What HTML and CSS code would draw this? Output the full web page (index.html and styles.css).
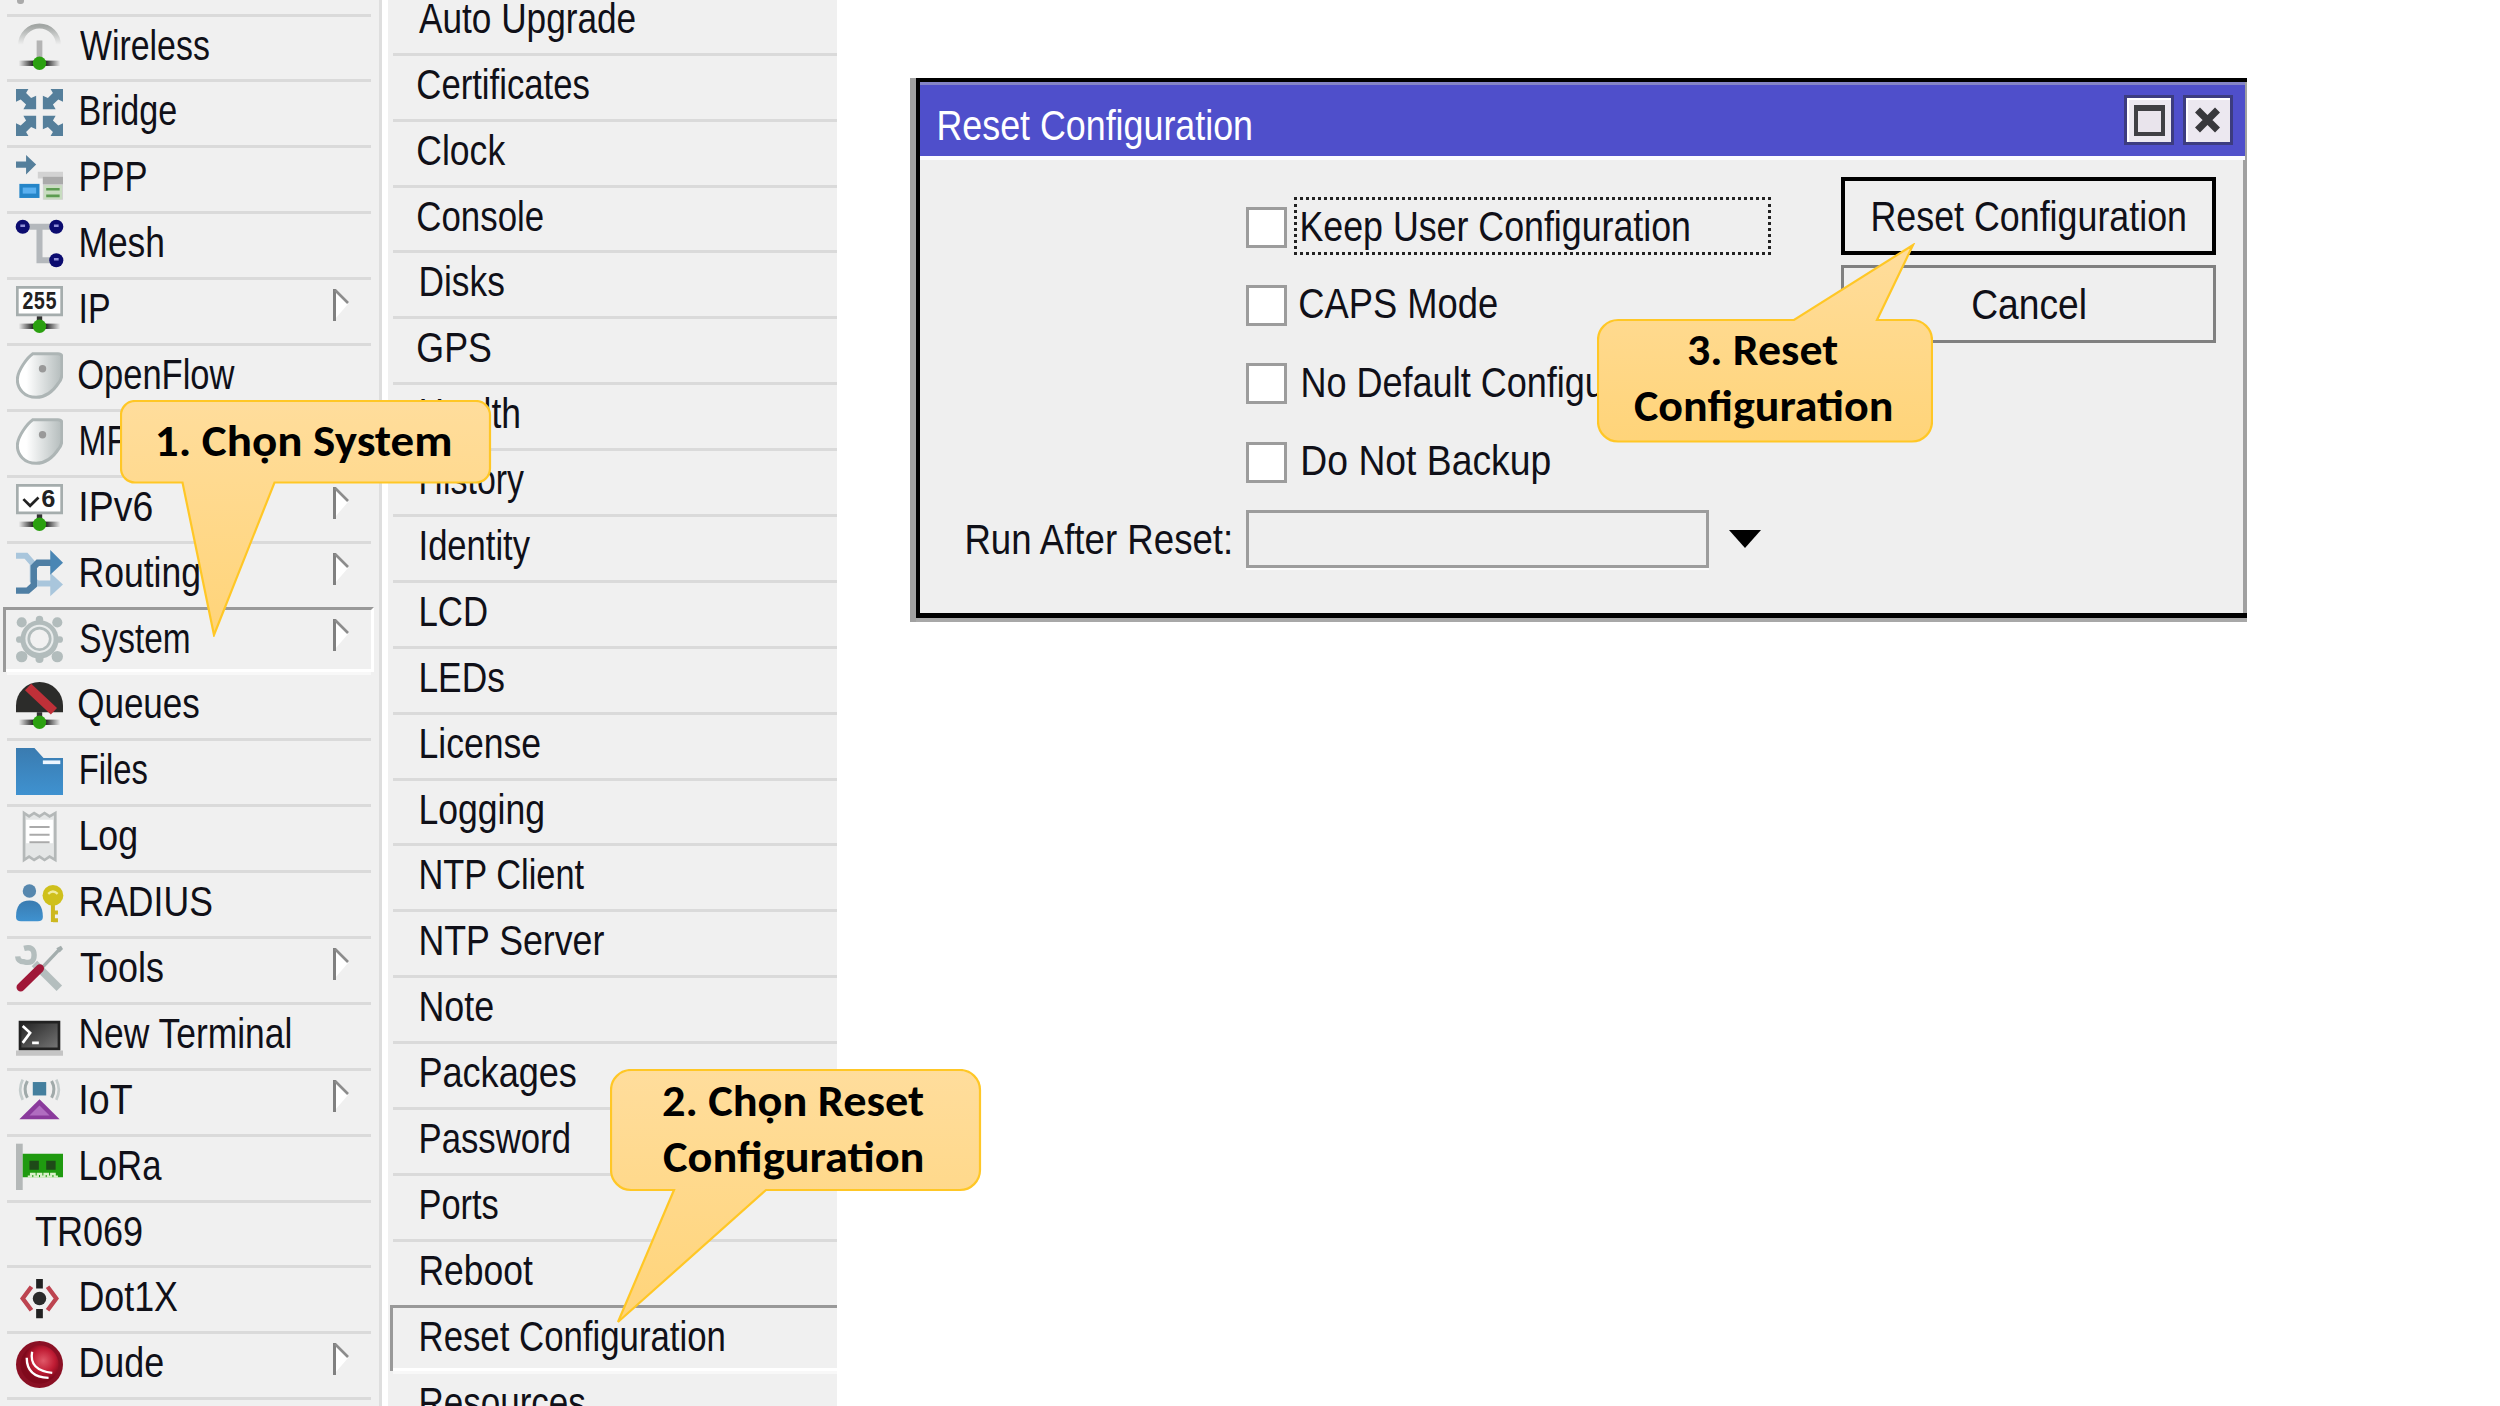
FILE: index.html
```html
<!DOCTYPE html>
<html lang="vi">
<head>
<meta charset="utf-8">
<title>Reset Configuration</title>
<link rel="stylesheet" href="styles.css">
</head>
<body>
<svg class="defs" aria-hidden="true">
  <defs>
    <linearGradient id="base"><stop offset="0" stop-color="#222" stop-opacity="0"/><stop offset=".35" stop-color="#222"/><stop offset=".65" stop-color="#222"/><stop offset="1" stop-color="#222" stop-opacity="0"/></linearGradient>
    <linearGradient id="arc" x2="0" y2="1"><stop offset="0" stop-color="#a2a6a4"/><stop offset="1" stop-color="#a2a6a4" stop-opacity="0"/></linearGradient>
    <linearGradient id="tagfill" x1=".2" y1=".5" x2="1" y2=".5"><stop offset="0" stop-color="#fff"/><stop offset="1" stop-color="#b4bcbc"/></linearGradient>
    <linearGradient id="blue" x2="0" y2="1"><stop offset="0" stop-color="#3a7bb0"/><stop offset="1" stop-color="#3f92d0"/></linearGradient>
    <linearGradient id="dark" x2="1" y2="1"><stop offset="0" stop-color="#222"/><stop offset="1" stop-color="#777"/></linearGradient>
    <radialGradient id="red" cx=".6" cy=".4"><stop offset="0" stop-color="#e05868"/><stop offset=".6" stop-color="#c01c34"/><stop offset="1" stop-color="#80091c"/></radialGradient>
    <linearGradient id="gold" x2="0" y2="1"><stop offset="0" stop-color="#ffdd9c"/><stop offset="1" stop-color="#ffd479"/></linearGradient>
    <symbol id="link" viewBox="0 0 14 14"><rect x=".8" y="11.2" width="12.4" height="1.6" fill="url(#base)"/><path d="M6.2 9h1.6v2H6.2z" fill="#333"/><circle cx="7" cy="12" r="2" fill="#2ba010"/></symbol>
    <symbol id="tag" viewBox="0 0 14 14"><path d="M5 .5h7.5q1.2 0 1.2 1.2v4.5q0 1.800-1 3C11 11.800 9 13.500 6 13.500c-3.500 0-5.600-2.500-5.600-5.300C.4 5.500 3.500 1.500 5 .5z" fill="url(#tagfill)" stroke="#adb5b5" stroke-width=".9"/><circle cx="7.900" cy="5" r="1.100" fill="#999"/></symbol>
    <symbol id="more" viewBox="0 0 18 34"><path d="M3 31V3l13 13z" fill="#fff"/><path d="M2.500 33V1" stroke="#808080" stroke-width="3"/><path d="M3 2l13 13" stroke="#8c8c8c" stroke-width="2.600" fill="none"/></symbol>
  </defs>
</svg>

<main class="stage">
  <nav class="menu main-menu">
    <div class="row first"><i class="speck"></i></div>
    <div class="row"><svg class="ico" viewBox="0 0 14 14"><path d="M1.400 6.500a5.600 5.600 0 0 1 11.200 0" fill="none" stroke="url(#arc)" stroke-width="1.500"/><path d="M7 5.200V11" stroke="#b4b4b4" stroke-width="1.700"/><rect x=".8" y="11.200" width="12.400" height="1.600" fill="url(#base)"/><circle cx="7" cy="12" r="2" fill="#2ba010"/></svg><span class="label" data-fit="129">Wireless</span></div>
    <div class="row"><svg class="ico" viewBox="0 0 14 14" fill="#557f9b"><g id="ar"><path d="M0 0h3.700L3 1.200l1.500 1.500L6 2v4H2.200L3 4.600 1.400 3.100 0 3.800z"/></g><use href="#ar" transform="matrix(-1 0 0 1 14 0)"/><use href="#ar" transform="matrix(1 0 0 -1 0 14)"/><use href="#ar" transform="matrix(-1 0 0 -1 14 14)"/></svg><span class="label" data-fit="95" data-dx="1">Bridge</span></div>
    <div class="row"><svg class="ico" viewBox="0 0 14 14"><path d="M0 1.900h3V0l3 2.800-3 3V3.800H0z" fill="#557f9b"/><path d="M6.500 5H14v8.300H8V7H6.500z" fill="#d2d2d2"/><path d="M8 6.500h6v2.200H8z" fill="#aaa"/><path d="M1 8.600h6v4.200H1z" fill="#2585c8"/><path d="M2 9.700h4v1.800H2z" fill="#5ab0f0"/><path d="M8.300 9h5.400v4.200H8.300z" fill="#c8dcc0"/><path d="M9 10.200h4M9 12.200h4" stroke="#5c9c50" stroke-width=".8"/></svg><span class="label" data-fit="65" data-dx="1">PPP</span></div>
    <div class="row"><svg class="ico" viewBox="0 0 14 14"><path d="M2 2h10M7 2v10h5" fill="none" stroke="#b4b8bc" stroke-width="1.800"/><g fill="#0c0c70"><circle cx="2" cy="2" r="2.100"/><circle cx="12" cy="2" r="2.100"/><circle cx="12" cy="12" r="2.100"/></g><path d="M1.300 1.700h1.400M11.300 1.700h1.400M11.300 11.700h1.400" stroke="#9090d8" stroke-width=".7"/></svg><span class="label" data-fit="82" data-dx="1">Mesh</span></div>
    <div class="row"><svg class="ico" viewBox="0 0 14 14"><use href="#link"/><path d="M.4.400h13.200v8.200H.4z" fill="#fff" stroke="#a5adad" stroke-width=".8"/><text class="digits" x="7" y="6.900" textLength="10.500" lengthAdjust="spacingAndGlyphs">255</text></svg><span class="label" data-fit="28" data-dx="1">IP</span><svg class="more"><use href="#more"/></svg></div>
    <div class="row"><svg class="ico" viewBox="0 0 14 14"><use href="#tag"/></svg><span class="label" data-fit="157" data-dx="-2">OpenFlow</span></div>
    <div class="row"><svg class="ico" viewBox="0 0 14 14"><use href="#tag"/></svg><span class="label" data-fit="88" data-dx="1">MPLS</span></div>
    <div class="row"><svg class="ico" viewBox="0 0 14 14"><use href="#link"/><path d="M.4.400h13.200v8.200H.4z" fill="#fff" stroke="#a5adad" stroke-width=".8"/><path d="M2.200 4.500l2 2 2.500-2.500" fill="none" stroke="#222" stroke-width=".8"/><text class="digits" x="9.600" y="6.900">6</text></svg><span class="label" data-fit="71" data-dx="1">IPv6</span><svg class="more"><use href="#more"/></svg></div>
    <div class="row"><svg class="ico" viewBox="0 0 14 14"><path d="M0 1.700h3L5 4v5l1.500 1H11" fill="none" stroke="#a9c6dc" stroke-width="1.800"/><path d="M10.200 6.800L14 10.300l-3.800 3.500z" fill="#a9c6dc"/><path d="M0 12.100h3.500L5.300 10.500V5L6.500 3.800H11" fill="none" stroke="#4f7fa4" stroke-width="1.900"/><path d="M10.200 0L14 3.800l-3.800 3.600z" fill="#4a86b4"/></svg><span class="label" data-fit="118" data-dx="1">Routing</span><svg class="more"><use href="#more"/></svg></div>
    <div class="row selected"><svg class="ico" viewBox="0 0 14 14"><g fill="#b2bcbc"><circle cx="7" cy="7" r="5.700"/><circle cx="1.700" cy="1.900" r="1.500"/><circle cx="12.300" cy="1.900" r="1.500"/><circle cx="1.700" cy="12.100" r="1.700"/><circle cx="12.300" cy="12.100" r="1.700"/><circle cx="7" cy="1" r="1.100"/><circle cx="7" cy="12.800" r="1.200"/><circle cx="1" cy="7" r="1"/><circle cx="13" cy="7" r="1"/></g><circle cx="7" cy="6.800" r="4.200" fill="#e9ecec"/><circle cx="7" cy="6.800" r="3.200" fill="#f1f1f1" stroke="#b2bcbc" stroke-width=".8"/></svg><span class="label" data-fit="109">System</span><svg class="more"><use href="#more"/></svg></div>
    <div class="row"><svg class="ico" viewBox="0 0 14 14"><use href="#link"/><path d="M0 9V7a7 7 0 0 1 14 0v2z" fill="#2c2c2a"/><path d="M3.600 1.500l7.700 7.200" stroke="#bf3038" stroke-width="2.700"/></svg><span class="label" data-fit="121" data-dx="-2">Queues</span></div>
    <div class="row"><svg class="ico" viewBox="0 0 14 14"><path d="M0 0h5.500l2.700 3H14v11H0z" fill="url(#blue)"/><path d="M8 3.700h5.200v1.100H8z" fill="#eef6ff"/></svg><span class="label" data-fit="66" data-dx="1">Files</span></div>
    <div class="row"><svg class="ico" viewBox="0 0 14 14"><path d="M2.400 0v14l1.500-1 1.500 1L7 13l1.500 1 1.500-1 1.700 1V0L10 1 8.500 0 7 1 5.400 0 3.900 1z" fill="#e4e6e6" stroke="#b4b8b8" stroke-width=".8"/><path d="M3 2h8v7H3z" fill="#fff"/><path d="M4 4.200h6M4 6.500h6M4 8.700h6" stroke="#aaa" stroke-width=".6"/></svg><span class="label" data-fit="55" data-dx="1">Log</span></div>
    <div class="row"><svg class="ico" viewBox="0 0 14 14"><circle cx="4" cy="3.600" r="2" fill="#5687ae"/><path d="M0 11.300q0-4.900 4-4.900t4 4.900q0 1.300-1.500 1.300h-5Q0 12.600 0 11.300z" fill="url(#blue)"/><path d="M11 6.500v6.300M11 10h1.500M11 12.300h1.500" stroke="#cdb820" stroke-width="1.200"/><circle cx="11" cy="4.900" r="3.100" fill="#cfc01c"/><path d="M9.600 4.400q1.400-1.300 2.800 0" fill="none" stroke="#f0eca0" stroke-width=".7"/></svg><span class="label" data-fit="131" data-dx="1">RADIUS</span></div>
    <div class="row"><svg class="ico" viewBox="0 0 14 14"><path d="M5.500 5.500l7.400 7.400" stroke="#b4bebe" stroke-width="2.300"/><path d="M2.400 1q3-.8 3 2t-3 2q-1.800 0-1.900-1.600" fill="none" stroke="#b4bebe" stroke-width="1.600"/><path d="M8 6.500L13 1.200" stroke="#a4aeae" stroke-width="1"/><path d="M12 1l1.400-.8.600 1-1 1z" fill="#a4aeae"/><path d="M1.400 12.600L7.100 7" stroke="#a01838" stroke-width="2.500" stroke-linecap="round"/></svg><span class="label" data-fit="83">Tools</span><svg class="more"><use href="#more"/></svg></div>
    <div class="row"><svg class="ico" viewBox="0 0 14 14"><path d="M0 11.800h14v1.500H0z" fill="#c4c4c4"/><path d="M1.200 3.300h11.600v8H1.200z" fill="url(#dark)" stroke="#222" stroke-width=".8"/><path d="M2 4.500l2.200 2L2 9.500M4.800 9.500h2" fill="none" stroke="#fff" stroke-width=".8"/></svg><span class="label" data-fit="210" data-dx="1">New Terminal</span></div>
    <div class="row"><svg class="ico" viewBox="0 0 14 14"><path d="M5 1.500h4v4H5z" fill="#447f9e"/><path d="M3.400 1.200q-1.400 2.500 0 5M10.600 1.200q1.400 2.500 0 5" fill="none" stroke="#a0aaaa" stroke-width=".9"/><path d="M2 .8q-1.500 3 0 6M12 .8q1.500 3 0 6" fill="none" stroke="#c4cccc" stroke-width=".8"/><path d="M7 6.600l6 6H1z" fill="#8a3a9c"/><path d="M7 8.500l3 3H4z" fill="#b06cc0"/></svg><span class="label" data-fit="51" data-dx="1">IoT</span><svg class="more"><use href="#more"/></svg></div>
    <div class="row"><svg class="ico" viewBox="0 0 14 14"><path d="M0 .2h2V14H0z" fill="#b4b8b8"/><path d="M2 3.200h12v7H2z" fill="#1f9a10"/><path d="M3.500 10h1v-.8h1v.8h1v-.8h1v.8h1v-.8h1v.8h1v-.8h1v.8h1" fill="none" stroke="#d8f0c8" stroke-width=".7"/><path d="M4 5.300h2.800V8H4zM9 5.300h2.800V8H9z" fill="#1e4a18"/></svg><span class="label" data-fit="81" data-dx="1">LoRa</span></div>
    <div class="row"><span class="label no-icon" data-fit="107">TR069</span></div>
    <div class="row"><svg class="ico" viewBox="0 0 14 14"><path d="M4.600 3.500L2 7l2.600 3.500M9.400 3.500L12 7l-2.600 3.500" fill="none" stroke="#bd4450" stroke-width="1.300"/><circle cx="7" cy="7" r="2" fill="#2b2b2b"/><path d="M6 1.200h2V4H6zM6 10.100h2v2.800H6z" fill="#222"/></svg><span class="label" data-fit="97" data-dx="1">Dot1X</span></div>
    <div class="row"><svg class="ico" viewBox="0 0 14 14"><circle cx="7" cy="7" r="7" fill="#8a1024"/><circle cx="7" cy="7" r="5.700" fill="url(#red)"/><path d="M4.800 3.200q-1 5.500 6 6.300" fill="none" stroke="#fff" stroke-width=".7"/><path d="M3.200 5q0 5.800 6.500 6" fill="none" stroke="#fff" stroke-width=".7"/></svg><span class="label" data-fit="82" data-dx="1">Dude</span><svg class="more"><use href="#more"/></svg></div>
    <div class="row"></div>
  </nav>

  <nav class="menu sub-menu">
    <div class="row"><span class="label" data-fit="216" data-dx="-2">Auto Upgrade</span></div>
    <div class="row"><span class="label" data-fit="171" data-dx="-3">Certificates</span></div>
    <div class="row"><span class="label" data-fit="88" data-dx="-3">Clock</span></div>
    <div class="row"><span class="label" data-fit="125" data-dx="-3">Console</span></div>
    <div class="row"><span class="label" data-fit="83">Disks</span></div>
    <div class="row"><span class="label" data-fit="73" data-dx="-3">GPS</span></div>
    <div class="row"><span class="label" data-fit="98">Health</span></div>
    <div class="row"><span class="label" data-fit="103">History</span></div>
    <div class="row"><span class="label" data-fit="109">Identity</span></div>
    <div class="row"><span class="label" data-fit="66">LCD</span></div>
    <div class="row"><span class="label" data-fit="83">LEDs</span></div>
    <div class="row"><span class="label" data-fit="119">License</span></div>
    <div class="row"><span class="label" data-fit="122">Logging</span></div>
    <div class="row"><span class="label" data-fit="164">NTP Client</span></div>
    <div class="row"><span class="label" data-fit="184">NTP Server</span></div>
    <div class="row"><span class="label" data-fit="72">Note</span></div>
    <div class="row"><span class="label" data-fit="155">Packages</span></div>
    <div class="row"><span class="label" data-fit="148">Password</span></div>
    <div class="row"><span class="label" data-fit="77">Ports</span></div>
    <div class="row"><span class="label" data-fit="112">Reboot</span></div>
    <div class="row selected"><span class="label" data-fit="303">Reset Configuration</span></div>
    <div class="row"><span class="label" data-fit="164">Resources</span></div>
  </nav>

  <section class="dialog">
    <header class="titlebar">
      <span class="label title" data-fit="312">Reset Configuration</span>
      <div class="winbtn"><svg viewBox="0 0 50 50"><path d="M12 13h27v26H12z" fill="#e9e4ec" stroke="#404044" stroke-width="4"/><path d="M10 10h31v6H10z" fill="#404044"/></svg></div>
      <div class="winbtn"><svg viewBox="0 0 50 50"><path d="M14.500 15l20 20M34.500 15l-20 20" stroke="#38383c" stroke-width="7"/></svg></div>
    </header>
    <div class="content">
      <div class="form">
        <div class="field focus"><i class="check"></i><span class="focus-box"><span class="label" data-fit="387">Keep User Configuration</span></span></div>
        <div class="field"><i class="check"></i><span class="label" data-fit="197" data-dx="-3">CAPS Mode</span></div>
        <div class="field"><i class="check"></i><span class="label" data-fit="390">No Default Configuration</span></div>
        <div class="field"><i class="check"></i><span class="label" data-fit="247">Do Not Backup</span></div>
        <div class="field run"><span class="label" data-fit="265" data-dx="1">Run After Reset:</span><i class="input"></i><svg class="drop" viewBox="0 0 32 18"><path d="M0 0h32L16 18z"/></svg></div>
      </div>
      <div class="buttons">
        <div class="button default"><span class="label" data-fit="312">Reset Configuration</span></div>
        <div class="button"><span class="label" data-fit="112">Cancel</span></div>
      </div>
    </div>
  </section>

  <aside class="callout one">
    <svg viewBox="0 0 372 237"><path d="M15 1H356a14 14 0 0 1 14 14V68.500a14 14 0 0 1-14 14H154.500L94 235 62.500 82.500H15a14 14 0 0 1-14-14V15A14 14 0 0 1 15 1z"/></svg>
    <p><span class="label" data-fit="294">1. Chọn System</span></p>
  </aside>
  <aside class="callout two">
    <svg viewBox="0 0 372 256"><path d="M21 1H350a20 20 0 0 1 20 20V101a20 20 0 0 1-20 20H156L8 253 64 121H21a20 20 0 0 1-20-20V21A20 20 0 0 1 21 1z"/></svg>
    <p><span class="label" data-fit="261">2. Chọn Reset</span><span class="label" data-fit="260">Configuration</span></p>
  </aside>
  <aside class="callout three">
    <svg viewBox="0 0 336 200"><path d="M21 77H197L316 2 280 77H315a20 20 0 0 1 20 20V178.500a20 20 0 0 1-20 20H21a20 20 0 0 1-20-20V97A20 20 0 0 1 21 77z"/></svg>
    <p><span class="label" data-fit="150">3. Reset</span><span class="label" data-fit="258">Configuration</span></p>
  </aside>
</main>
<script src="fit.js"></script>
</body>
</html>
```
FILE: styles.css
```css
* { box-sizing: border-box; }
body { margin: 0; background: #fff; }
.defs { position: absolute; width: 0; height: 0; }

.stage {
  position: relative;
  display: flex;
  align-items: flex-start;
  width: 2500px;
  height: 1406px;
  overflow: hidden;
  font: 42px "Liberation Sans", Arial, sans-serif;
  color: #101018;
}
.label { display: block; flex: none; white-space: nowrap; transform-origin: 0 50%; }

/* menus */
.menu { height: 1406px; overflow: hidden; background: #f0f0f0; flex: none; display: flex; flex-direction: column; }
.row { flex: none; display: flex; align-items: flex-start; height: 65.9px; line-height: 64px; border-top: 3px solid #dadada; }
.row > * { margin-top: -3px; }
.main-menu { width: 388px; padding-right: 11px; border-right: 6px solid #fff; box-shadow: inset -3px 0 #dedede; }
.main-menu .row { margin-left: 7px; padding-left: 9px; }
.main-menu .row.first { margin-top: -52.400px; align-items: flex-end; padding-left: 10px; }
.speck { width: 7px; height: 4px; margin-bottom: 10px; background: #aaa; border-radius: 0 0 3px 3px; }
.ico { flex: none; width: 47px; height: 47px; margin: 6.300px 17px 0 0; overflow: visible; }
.digits { font: bold 7.500px "Liberation Mono", monospace; fill: #222; text-anchor: middle; }
.label.no-icon { margin-left: 19px; }
.more { flex: none; width: 18px; height: 34px; margin: 8px 21px 0 auto; }

.sub-menu { width: 449px; }
.sub-menu .row { margin-left: 5px; padding-left: 28px; }
.sub-menu .row:first-child { margin-top: -13.100px; }

.menu .row.selected { border-top-color: #999; border-left: 3px solid #999; box-shadow: inset 0 -3px #fff; }
.main-menu .row.selected { margin-left: 3px; margin-right: -3px; padding-left: 10px; border-right: 3px solid #fff; }
.sub-menu .row.selected { margin-left: 2px; padding-left: 28px; }
.row.selected + .row { border-top-color: #f8f8f8; }

/* dialog */
.dialog {
  flex: none;
  width: 1337px;
  height: 544px;
  margin: 78px 0 0 73px;
  background: #efefef;
  display: grid;
  grid-template-rows: 78px 1fr;
  padding: 4px 1px 0 10px;
  box-shadow: inset 6px 0 #a0a0a0, inset 0 4px #000, inset 0 -4px #a8a8a8, inset 10px 0 #000, inset 0 -9px #000, inset -4px 0 #a0a0a0;
}
.titlebar {
  display: flex;
  align-items: flex-start;
  background: #4f4fcb;
  border-top: 3px solid #8484c8;
  border-bottom: 4px solid #fafaff;
  padding: 10px 13px 0 19px;
  margin-right: 1px;
  color: #fff;
  gap: 9px;
}
.title { line-height: 62px; margin: 0 auto 0 0; }
.winbtn { flex: none; width: 50px; height: 50px; border: 3px solid #3c3c80; background: #ece8f0; box-shadow: inset 2px 2px #fff; }
.winbtn svg { display: block; width: 50px; height: 50px; margin: -3px; }
.winbtn:last-child { margin-right: -1px; }

.content { display: flex; justify-content: space-between; align-items: flex-start; padding: 17px 30px 0 46px; }
.form { flex: none; width: 810px; padding-top: 20px; }
.field { display: flex; align-items: center; height: 58px; margin-bottom: 20.400px; padding-left: 280px; line-height: 60px; }
.check { flex: none; width: 41px; height: 41px; margin: 2px 16px 0 0; background: #fff; border: 3px solid #9c9c9c; }
.focus .check { margin-right: 7px; }
.focus-box { flex: none; width: 477px; height: 58px; border: 3px dotted #222; padding-left: 5px; line-height: 58px; }
.focus-box .label { margin-top: -2px; }
.run { padding-left: 0; margin: 0; line-height: 58px; }
.run .label { width: 280px; overflow: visible; }
.input { flex: none; width: 463px; height: 58px; border: 3px solid #9c9c9c; box-shadow: 0 2px #fbfbfb; margin-top: -1px; }
.drop { flex: none; width: 32px; height: 18px; margin: -2px 0 0 20px; }
.buttons { flex: none; display: grid; gap: 10px; width: 375px; }
.button { display: flex; justify-content: center; height: 78px; border: 3px solid #808080; line-height: 73px; }
.button.default { border: 4px solid #000; line-height: 71px; }

/* callouts */
.callout { position: absolute; font: bold 43.500px Carlito, Lato, sans-serif; color: #000; }
.callout svg { position: absolute; left: 0; top: 0; width: 100%; height: 100%; }
.callout path { fill: url(#gold); stroke: #ffc726; stroke-width: 2.200; }
.callout p { position: relative; margin: 0; display: flex; flex-direction: column; align-items: center; line-height: 56px; }
.one { left: 120px; top: 400px; width: 372px; height: 237px; }
.one p { padding: 14px 4px 0 0; }
.two { left: 610px; top: 1069px; width: 372px; height: 256px; }
.two p { padding: 5px 6px 0 0; }
.three { left: 1597px; top: 243px; width: 336px; height: 200px; }
.three p { padding: 80px 5px 0 0; }
```
FILE: fit.js
```js
// Condenses each label so that its drawn width equals its data-fit value.
const ctx = document.createElement('canvas').getContext('2d');
for (const el of document.querySelectorAll('[data-fit]')) {
  const cs = getComputedStyle(el);
  ctx.font = `${cs.fontWeight} ${cs.fontSize} ${cs.fontFamily}`;
  const m = ctx.measureText(el.textContent);
  const fit = +el.dataset.fit;
  const s = fit / (m.actualBoundingBoxLeft + m.actualBoundingBoxRight);
  const dx = +(el.dataset.dx || 0);
  if (!el.closest('.run')) el.style.width = `${fit}px`;
  el.style.transform = `translateX(${dx + m.actualBoundingBoxLeft * s}px) scaleX(${s})`;
}
```
